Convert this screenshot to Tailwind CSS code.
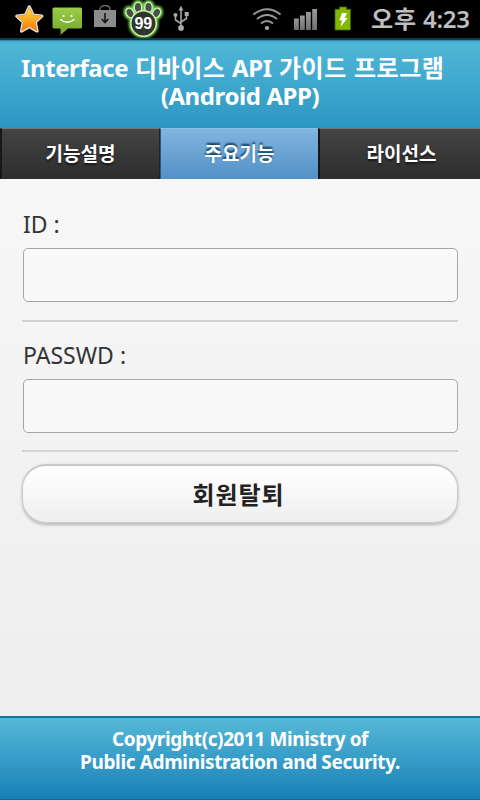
<!DOCTYPE html>
<html lang="ko">
<head>
<meta charset="utf-8">
<title>Interface 디바이스 API 가이드 프로그램</title>
<script src="https://cdn.jsdelivr.net/npm/@tailwindcss/browser@4"></script>
</head>
<body class="w-[480px] h-[800px] overflow-hidden flex flex-col bg-[#f3f3f3] font-['Noto_Sans','Noto_Sans_CJK_KR',sans-serif]">
<div class="h-[38px] shrink-0 bg-black flex items-start justify-between">
  <svg class="w-[200px] h-[38px]" viewBox="0 0 200 38">
    <defs>
      <linearGradient id="star" x2="0" y2="1"><stop stop-color="#ffe14a"/><stop offset=".55" stop-color="#ffa51f"/><stop offset="1" stop-color="#f57a00"/></linearGradient>
      <linearGradient id="sms" x2="0" y2="1"><stop stop-color="#9bce48"/><stop offset="1" stop-color="#74a529"/></linearGradient>
      <filter id="glow" x="-30%" y="-30%" width="160%" height="160%"><feGaussianBlur stdDeviation="1"/></filter>
    </defs>
    <path d="M29.300 7l3.700 8 8.800 1-6.500 6.100 1.800 8.900-7.800-4.400-7.800 4.400 1.800-8.900-6.500-6.100 8.800-1z" fill="url(#star)" stroke="#e9e2dd" stroke-width="3.200" stroke-linejoin="round"/>
    <path d="M29.300 7l3.700 8 8.800 1-6.500 6.100 1.800 8.900-7.800-4.400-7.800 4.400 1.800-8.900-6.500-6.100 8.800-1z" fill="url(#star)" stroke="#d98a45" stroke-width=".7"/>
    <path d="M54 7.500h26.500q1.500 0 1.500 1.500v18q0 1.500-1.500 1.500H68L60.500 35v-6.500H54q-1.500 0-1.500-1.500V9q0-1.500 1.500-1.500z" fill="url(#sms)"/>
    <path d="M60.500 19.500q6.800 5.500 13.500 0" fill="none" stroke="#fff" stroke-width="1.300" stroke-linecap="round"/>
    <circle cx="63.500" cy="16" r="1.100" fill="#fff"/><circle cx="71.500" cy="16" r="1.100" fill="#fff"/>
    <path d="M100 10.500V9.500q0-3.800 5-3.800t5 3.800v1" fill="none" stroke="#777" stroke-width="1.300"/>
    <path d="M94 10h22v17H94z" fill="#8c8c8c"/>
    <path d="M105 13v9M101.800 19l3.200 3.600 3.200-3.600" fill="none" stroke="#111" stroke-width="1.500"/>
    <g stroke="#6fc246" stroke-width="5" filter="url(#glow)"><circle cx="143.500" cy="23.500" r="12.500"/><ellipse cx="130" cy="13" rx="3.800" ry="5" transform="rotate(-30 130 13)"/><ellipse cx="138" cy="7.500" rx="3.800" ry="5.200"/><ellipse cx="148.500" cy="7.500" rx="3.800" ry="5.200"/><ellipse cx="156.500" cy="13" rx="3.800" ry="5" transform="rotate(30 156.500 13)"/></g>
    <g fill="#4a4f49" stroke="#c6f5ae" stroke-width="1.500"><ellipse cx="130" cy="13" rx="3.800" ry="5" transform="rotate(-30 130 13)"/><ellipse cx="138" cy="7.500" rx="3.800" ry="5.200"/><ellipse cx="148.500" cy="7.500" rx="3.800" ry="5.200"/><ellipse cx="156.500" cy="13" rx="3.800" ry="5" transform="rotate(30 156.500 13)"/><circle cx="143.500" cy="23.500" r="12.700" fill="#30352f"/></g>
    <text x="143.300" y="29" text-anchor="middle" class="font-['Liberation_Sans'] font-bold text-[16px]" fill="#fff">99</text>
    <g stroke="#aaa" stroke-width="1.500" fill="none"><path d="M181 9v18M181 23.500l-5.500-3.500v-4M181 22l5.500-3.500V15"/></g>
    <g fill="#aaa"><path d="M178.500 10.500l2.500-4.700 2.500 4.700z"/><circle cx="181" cy="28" r="2.900"/><circle cx="175.500" cy="15" r="2"/><path d="M184.700 12h4v4h-4z"/></g>
  </svg>
  <div class="flex">
  <svg class="w-[120px] h-[38px]" viewBox="250 0 120 38">
    <defs><linearGradient id="bars" x2="0" y2="1"><stop stop-color="#999"/><stop offset="1" stop-color="#707070"/></linearGradient></defs>
    <g fill="none" stroke="#9a9a9a" stroke-width="1.900"><path d="M253.500 14.500q13.500-10.500 27 0"/><path d="M257 19q10-8 20 0"/><path d="M261 23.500q6-5 12 0"/></g>
    <circle cx="267" cy="28" r="2.100" fill="#aaa"/>
    <g fill="url(#bars)"><path d="M294 18.500h4.800V30H294z"/><path d="M300 15.500h4.800V30H300z"/><path d="M306 12h4.800v18H306z"/><path d="M312.200 9h4.800v21h-4.800z"/></g>
    <path d="M339.500 7h7v2.200h4V30h-15.500V9.200h4.500z" fill="#83b800" stroke="#3f6500" stroke-width=".8"/>
    <path d="M342 13h5l-2.300 5h2.800L340.500 27l1.600-6.800h-2.800z" fill="#fff"/>
  </svg>
  <div class="w-[110px] h-[38px] pl-[1px] whitespace-nowrap text-[#bebebe] font-semibold text-[24px] leading-[38px]"><span class="inline-block w-[52px] tracking-[1px]">오후</span><span class="inline-block tracking-[-0.3px]">4:23</span></div>
  </div>
</div>
<header class="h-[90px] shrink-0 bg-linear-to-b from-[#50b8d7] to-[#2c97c3] border-t-2 border-[#103c50] shadow-[inset_0_3px_2px_-2px_#287c9b] text-white text-[24px] font-bold leading-[28px] text-center pt-[14px] whitespace-nowrap">
  <div class="h-[28px] flex pl-[21px]"><span class="w-[114px] text-left tracking-[-0.4px]">Interface</span><span class="w-[97px] text-left tracking-[0.5px]">디바이스</span><span class="w-[47px] text-left tracking-[-0.4px]">API</span><span class="w-[75px] text-left tracking-[0.5px]">가이드</span><span class="text-left tracking-[0.5px]">프로그램</span></div>
  <div class="h-[28px] tracking-[-0.4px]">(Android APP)</div>
</header>
<nav class="h-[51px] shrink-0 flex text-white text-[19px] font-bold text-center leading-[51px] [text-shadow:0_2px_2px_#0008]">
  <div class="w-[160px] bg-linear-to-b from-[#444] to-[#2d2d2d] border-t border-t-[#777] border-l-2 border-l-[#171717] border-r border-r-[#222]">기능설명</div>
  <div class="w-[158px] bg-linear-to-b from-[#82b5df] to-[#5290c6] border-t border-t-[#8fbee5] border-l border-l-[#285779] [text-shadow:0_-2px_2px_#073b5d]">주요기능</div>
  <div class="w-[162px] bg-linear-to-b from-[#444] to-[#2d2d2d] border-t border-t-[#777] border-l-2 border-l-[#171717] pl-[3px]">라이선스</div>
</nav>
<main class="flex-1 bg-linear-to-b from-[#f7f7f7] to-[#eeeeee] px-[22px] pt-[29px] text-[#333] text-[23px]">
  <label class="block h-[40px] pl-px leading-[32px]">ID :</label>
  <div class="h-[54px] mx-px w-[435px] rounded-[5px] border border-[#a6a6a6] bg-[#f9f9f9]"></div>
  <div class="h-[2px] mt-[18px] bg-[#d3d3d3]"></div>
  <label class="block h-[40px] pl-px mt-[17px] leading-[32px]">PASSWD :</label>
  <div class="h-[54px] mx-px w-[435px] rounded-[5px] border border-[#a6a6a6] bg-[#f9f9f9]"></div>
  <div class="h-[2px] mt-[17px] bg-[#d3d3d3]"></div>
  <button class="block w-[436px] h-[60px] mt-[12px] rounded-[24px] border-y-2 border-x border-[#c8c8c8] bg-linear-to-b from-white to-[#efefef] shadow-[0_1px_3px_#0004] text-[#222] text-[24px] tracking-[0.9px] font-bold leading-[54px] pt-[2px] pr-[3px]">회원탈퇴</button>
</main>
<footer class="h-[84px] shrink-0 bg-linear-to-b from-[#54b9d7] to-[#1680b7] border-t-2 border-t-[#15719c] border-b border-b-[#08699c] text-white text-[19px] font-bold leading-[23px] text-center pt-[10px] whitespace-nowrap">
  <div class="tracking-[-0.4px]">Copyright(c)2011 Ministry of</div>
  <div class="tracking-[-0.36px]">Public Administration and Security.</div>
</footer>
</body>
</html>
